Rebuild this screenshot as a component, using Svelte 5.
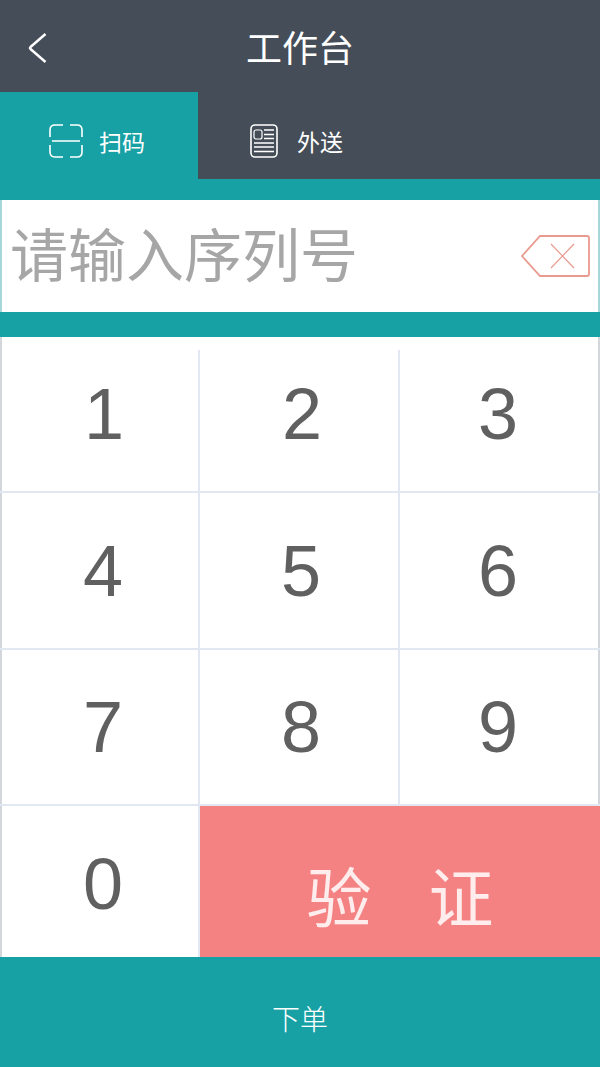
<script lang="ts">
  type Tab = 'scan' | 'delivery';

  const digits = ['1', '2', '3', '4', '5', '6', '7', '8', '9', '0'];

  let activeTab = $state<Tab>('scan');
  let serial = $state('');

  const press = (digit: string) => {
    serial += digit;
  };

  const removeLast = () => {
    serial = serial.slice(0, -1);
  };
</script>

<div class="workbench">
  <header class="title-bar">
    <button class="back-btn" type="button" aria-label="返回">
      <svg width="20" height="32" viewBox="0 0 20 32" fill="none" stroke="currentColor" stroke-width="2.4">
        <path d="M17.500 2 L2.500 15 Q1.500 16 2.500 17 L17.500 30" />
      </svg>
    </button>
    <h1>工作台</h1>
  </header>

  <nav class="tabs">
    <button
      class="tab"
      class:active={activeTab === 'scan'}
      type="button"
      onclick={() => (activeTab = 'scan')}
    >
      <svg width="34" height="34" viewBox="0 0 34 34" fill="none" stroke="currentColor" stroke-width="1.6">
        <path d="M1 13 V6 Q1 1 6 1 H14 M21 1 H28 Q33 1 33 6 V13 M33 21 V28 Q33 33 28 33 H21 M14 33 H6 Q1 33 1 28 V21 M3 17 H31" />
      </svg>
      <span>扫码</span>
    </button>
    <button
      class="tab"
      class:active={activeTab === 'delivery'}
      type="button"
      onclick={() => (activeTab = 'delivery')}
    >
      <svg width="34" height="34" viewBox="0 0 34 34" fill="none" stroke="currentColor" stroke-width="1.6">
        <rect x="4" y="1" width="26" height="32" rx="4" />
        <rect x="7" y="6" width="8" height="9" rx="2" stroke-width="1.2" />
        <path d="M17 6 H27 M17 10.500 H27 M17 14.500 H27 M7 19 H27 M7 23 H27 M7 27.500 H27" />
      </svg>
      <span>外送</span>
    </button>
  </nav>

  <div class="serial-row">
    <input
      class="serial-input"
      type="text"
      inputmode="numeric"
      aria-label="序列号"
      placeholder="请输入序列号"
      bind:value={serial}
    />
    <button class="delete-btn" type="button" aria-label="删除" onclick={removeLast}>
      <svg width="70" height="44" viewBox="0 0 70 44" fill="none" stroke="currentColor">
        <path d="M2 22 L20 2 H67 Q69 2 69 4 V40 Q69 42 67 42 H20 Z" stroke-width="1.800" />
        <path d="M31 10 L54 34 M54 10 L31 34" stroke-width="1.200" />
      </svg>
    </button>
  </div>

  <div class="keypad">
    {#each digits as digit (digit)}
      <button class="key" type="button" onclick={() => press(digit)}>{digit}</button>
    {/each}
    <button class="verify-btn" type="button">
      <span>验</span>
      <span>证</span>
    </button>
  </div>

  <button class="order-btn" type="button">下单</button>
</div>

<style>
  :global(body) {
    margin: 0;
    background: #17a1a5;
  }

  .workbench {
    display: flex;
    flex-direction: column;
    min-height: 100vh;
    background: #17a1a5;
    color: #fff;
    font-family: "Noto Sans CJK SC", sans-serif;
  }

  button,
  input {
    box-sizing: border-box;
    margin: 0;
    padding: 0;
    border: 0;
    border-radius: 0;
    background: transparent;
    color: inherit;
    font: inherit;
  }

  button {
    cursor: pointer;
  }

  svg {
    display: block;
    flex: none;
  }

  .title-bar {
    display: grid;
    grid-template-columns: 72px 1fr 72px;
    align-items: center;
    height: 92px;
    background: #454e58;
  }

  .back-btn {
    display: flex;
    align-items: center;
    height: 92px;
    padding: 4px 0 0 28px;
  }

  h1 {
    margin: 0;
    font-size: 36px;
    font-weight: 400;
    line-height: 52px;
    text-align: center;
  }

  .tabs {
    display: flex;
    height: 87px;
    background: #454e58;
  }

  .tab {
    display: flex;
    align-items: center;
    gap: 16px;
    width: 33%;
    padding: 10px 0 0 49px;
    font-size: 23px;
  }

  .tab.active {
    background: #17a1a5;
  }

  .serial-row {
    display: flex;
    align-items: center;
    height: 112px;
    margin: 21px 0 25px;
    padding: 0 10px;
    background: #fff;
    box-shadow: inset 2px 0 #a5d7d9, inset -2px 0 #a5d7d9;
  }

  .serial-input {
    flex: 1;
    min-width: 0;
    height: 112px;
    padding-bottom: 8px;
    color: #606060;
    font-size: 58px;
    outline: none;
  }

  .serial-input::placeholder {
    color: #a6a6a6;
    opacity: 1;
  }

  .delete-btn {
    color: #e99a8f;
  }

  .keypad {
    display: grid;
    grid-template-columns: repeat(3, 1fr);
    grid-template-rows: 156px 157px 156px 151px;
    background: #fff;
    box-shadow: inset 2px 0 #d3d7db, inset -2px 0 #d3d7db;
  }

  .key {
    padding-left: 4px;
    border-bottom: 2px solid #e1e8f1;
    border-right: 2px solid #e1e8f1;
    color: #606060;
    font-family: "Liberation Sans", Arial, sans-serif;
    font-size: 72px;
    line-height: 80px;
  }

  /* the column rules stop short of the keypad's top edge */
  .key:nth-child(-n + 3) {
    border-right: 0;
    background: linear-gradient(#e1e8f1, #e1e8f1) right bottom / 2px calc(100% - 13px) no-repeat;
  }

  .key:nth-child(3) {
    background: none;
  }

  .key:nth-child(3n + 1) {
    padding-left: 8px;
  }

  .key:nth-child(3n) {
    padding: 0 4px 0 0;
    border-right: 0;
  }

  .key:nth-child(10) {
    padding-top: 4px;
    border-bottom: 0;
  }

  .verify-btn {
    grid-column: span 2;
    display: flex;
    align-items: center;
    justify-content: center;
    gap: 57px;
    padding-top: 24px;
    background: #f58282;
    color: #ffecec;
    font-size: 65px;
    line-height: 80px;
  }

  .order-btn {
    flex: 1;
    min-height: 110px;
    padding-top: 12px;
    font-size: 28px;
    font-weight: 300;
  }
</style>
